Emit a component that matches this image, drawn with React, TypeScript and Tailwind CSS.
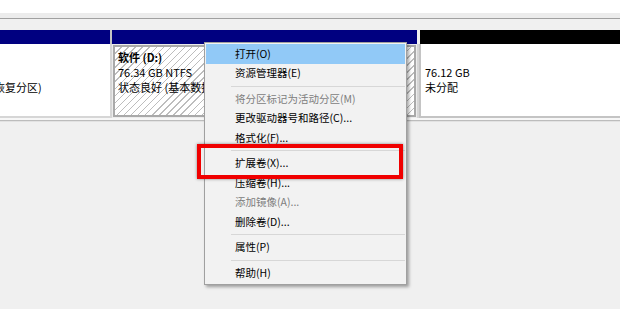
import React from "react";

type Item = { label: string; disabled?: boolean; active?: boolean } | "sep";

const items: Item[] = [
  { label: "打开(O)", active: true },
  { label: "资源管理器(E)" },
  "sep",
  { label: "将分区标记为活动分区(M)", disabled: true },
  { label: "更改驱动器号和路径(C)..." },
  { label: "格式化(F)..." },
  "sep",
  { label: "扩展卷(X)..." },
  { label: "压缩卷(H)..." },
  { label: "添加镜像(A)...", disabled: true },
  { label: "删除卷(D)..." },
  "sep",
  { label: "属性(P)" },
  "sep",
  { label: "帮助(H)" },
];

export default function App() {
  return (
    <div className="relative w-[620px] h-[309px] overflow-hidden bg-[#f0f0f0] font-['Noto_Sans_CJK_SC','Noto_Sans',sans-serif] text-[11px] text-black">
      {/* top strip */}
      <div className="h-[13px] bg-white" />
      <div className="h-[5px] bg-[#ececec]" />
      <div className="h-[1px] bg-[#a0a0a0]" />
      <div className="h-[11px] bg-[#f0f0f0]" />

      {/* disk row */}
      <div className="flex h-[88px]">
        {/* column 1 */}
        <div className="flex w-[110px] flex-col">
          <div className="h-[14px] bg-[#000080]" />
          <div className="flex-1 overflow-hidden border-b-2 border-[#d6d6d6] bg-white pt-[36px] leading-[15px] whitespace-nowrap">
            <span className="-ml-[6px] inline-block">恢复分区)</span>
          </div>
        </div>
        <div className="flex w-[2px] flex-col">
          <div className="h-[14px] bg-[#c4c4c4]" />
          <div className="flex-1 bg-[#d6d6d6]" />
        </div>
        {/* column 2 */}
        <div className="flex w-[305px] flex-col">
          <div className="h-[14px] bg-[#000080]" />
          <div className="flex-1 bg-[#ececec] p-[1px]">
            <div className="h-full border-2 border-[#a9a9a9] bg-[repeating-linear-gradient(135deg,#ffffff_0px,#ffffff_4px,#bdbdbd_4px,#bdbdbd_5px)] pl-[3px] pt-[3px] leading-[15px] whitespace-nowrap">
              <div className="font-bold">软件 (D:)</div>
              <div>76.34 GB NTFS</div>
              <div>状态良好 (基本数据分区)</div>
            </div>
          </div>
        </div>
        <div className="flex w-[2px] flex-col">
          <div className="h-[14px] bg-[#f0f0f0]" />
          <div className="flex-1 bg-[#d6d6d6]" />
        </div>
        {/* column 3 */}
        <div className="flex flex-1 flex-col">
          <div className="ml-[1px] h-[14px] bg-black" />
          <div className="flex-1 border-b-2 border-l-2 border-[#c4c4c4] bg-white pl-[4px] pt-[21px] leading-[15px]">
            <div>76.12 GB</div>
            <div>未分配</div>
          </div>
        </div>
      </div>

      <div className="h-[2px] bg-[#f7f7f7]" />
      <div className="h-[1px] bg-[#bcbcbc]" />
      <div className="h-[1px] bg-[#e2e2e2]" />

      {/* context menu */}
      <div className="absolute left-[204px] top-[42px] w-[203px] border border-[#a0a0a0] bg-[#f2f2f2] px-[1px] py-[1px] text-[10.5px] shadow-[2px_2px_3px_rgba(0,0,0,0.35)]">
        {items.map((it, i) =>
          it === "sep" ? (
            <div key={i} className="flex h-[6px] items-center pl-[25px]">
              <div className="h-[1px] flex-1 bg-[#d7d7d7]" />
            </div>
          ) : (
            <div
              key={i}
              className={
                "flex h-[19.5px] items-center pl-[29px] whitespace-nowrap " +
                (it.active ? "bg-[#91c9f7] " : "") +
                (it.disabled ? "text-[#7d7d7d]" : "text-black")
              }
            >
              {it.label}
            </div>
          )
        )}
      </div>

      {/* red annotation box */}
      <div className="absolute left-[197px] top-[144px] h-[35px] w-[206px] border-4 border-[#f00000] shadow-[0_0_3px_rgba(0,0,0,0.45)]" />
    </div>
  );
}
